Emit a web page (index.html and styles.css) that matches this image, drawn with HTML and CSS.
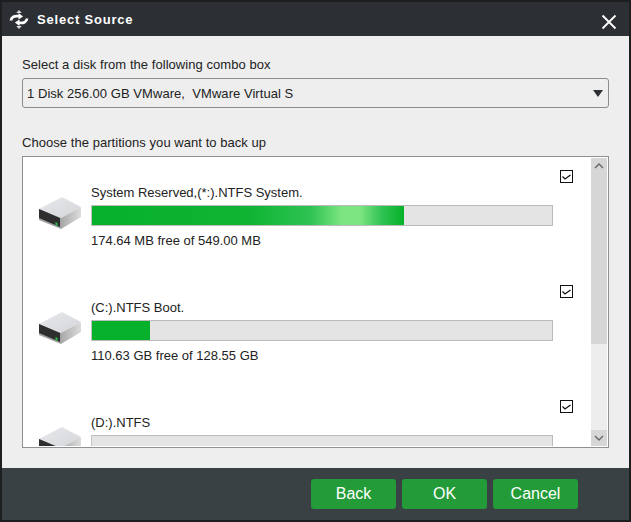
FILE: index.html
```html
<!DOCTYPE html>
<html lang="en">
<head>
<meta charset="utf-8">
<title>Select Source</title>
<link rel="stylesheet" href="styles.css">
</head>
<body>
<div class="dialog">
  <header class="titlebar">
    <svg class="logo" width="20" height="22" viewBox="0 0 20 22"><path d="M10 2l2.800 3H7.200zM10 21l-2.800-3h5.600z" fill="#d8d8d8"/><path d="M2 12.500C2.300 9 5.500 7.500 10 8.200" stroke="#fff" stroke-width="2.800" fill="none"/><path d="M18 10.500c-.3 3.500-3.500 5-8 4.300" stroke="#fff" stroke-width="2.800" fill="none"/><path d="M9.500 5l4.600 3.400-4.600 3.200zM10.500 18l-4.600-3.400 4.600-3.200z" fill="#fff"/></svg>
    <span class="title">Select Source</span>
    <svg class="close" width="16" height="16" viewBox="0 0 16 16"><path d="M1.500 1.500l13 13M14.500 1.500l-13 13" stroke="#fff" stroke-width="1.800" fill="none"/></svg>
  </header>
  <main class="content">
    <div class="label">Select a disk from the following combo box</div>
    <div class="combo"><span>1 Disk 256.00 GB VMware,&nbsp; VMware Virtual S</span><i class="caret"></i></div>
    <div class="label second">Choose the partitions you want to back up</div>
    <div class="listbox">
      <div class="rows">
        <section class="row">
          <span class="check"><svg width="13" height="13" viewBox="0 0 13 13"><path d="M2.500 6.500l2.500 2.500 5.500-4" stroke="#111" stroke-width="1.300" fill="none"/></svg></span>
          <svg class="drive" width="44" height="34" viewBox="0 0 44 34"><use href="#disk"/></svg>
          <div class="info">
            <div class="name">System Reserved,(*:).NTFS System.</div>
            <div class="bar"><div class="fill shine" style="width:67.800%"></div></div>
            <div class="free">174.64 MB free of 549.00 MB</div>
          </div>
        </section>
        <section class="row">
          <span class="check"><svg width="13" height="13" viewBox="0 0 13 13"><path d="M2.500 6.500l2.500 2.500 5.500-4" stroke="#111" stroke-width="1.300" fill="none"/></svg></span>
          <svg class="drive" width="44" height="34" viewBox="0 0 44 34"><use href="#disk"/></svg>
          <div class="info">
            <div class="name">(C:).NTFS Boot.</div>
            <div class="bar"><div class="fill" style="width:12.600%"></div></div>
            <div class="free">110.63 GB free of 128.55 GB</div>
          </div>
        </section>
        <section class="row">
          <span class="check"><svg width="13" height="13" viewBox="0 0 13 13"><path d="M2.500 6.500l2.500 2.500 5.500-4" stroke="#111" stroke-width="1.300" fill="none"/></svg></span>
          <svg class="drive" width="44" height="34" viewBox="0 0 44 34"><use href="#disk"/></svg>
          <div class="info">
            <div class="name">(D:).NTFS</div>
            <div class="bar"></div>
          </div>
        </section>
      </div>
      <div class="scrollbar">
        <div class="arrow"><svg width="10" height="6" viewBox="0 0 10 6"><path d="M1 5l4-4 4 4" stroke="#666" stroke-width="1.400" fill="none"/></svg></div>
        <div class="thumb"></div>
        <div class="track"></div>
        <div class="arrow"><svg width="10" height="6" viewBox="0 0 10 6"><path d="M1 1l4 4 4-4" stroke="#666" stroke-width="1.400" fill="none"/></svg></div>
      </div>
    </div>
  </main>
  <footer class="footer">
    <button class="btn">Back</button>
    <button class="btn">OK</button>
    <button class="btn">Cancel</button>
  </footer>
</div>
<svg class="defs" width="0" height="0">
  <defs>
    <linearGradient id="top" x1="0" y1="0" x2="1" y2="1"><stop offset="0" stop-color="#e8e9ec"/><stop offset="1" stop-color="#d4d5d9"/></linearGradient>
    <linearGradient id="side" x1="0" y1="0" x2="1" y2="0"><stop offset="0" stop-color="#a8a8a8"/><stop offset="1" stop-color="#dcdcdc"/></linearGradient>
    <g id="disk">
      <path d="M1 13L24 1l19 10-20 11z" fill="url(#top)"/>
      <path d="M23 22l20-11v10L23 33z" fill="url(#side)"/>
      <path d="M1 13l22 9v11L1 24z" fill="#a0a0a0"/>
      <path d="M1 13l21 9v9L1 22z" fill="#2e2e2e"/>
      <path d="M17.500 26l2 1v3l-2-1z" fill="#2fbf4a"/>
    </g>
  </defs>
</svg>
</body>
</html>
```
FILE: styles.css
```css
* { box-sizing: border-box; }
html, body { margin: 0; height: 100%; }
body {
  background: #1c1e20;
  padding: 2px;
  font-family: "Liberation Sans", Arial, sans-serif;
  font-size: 13px;
  color: #222;
  overflow: hidden;
}
.dialog {
  width: 627px;
  height: 518px;
  display: flex;
  flex-direction: column;
  background: #eeeeee;
}
.titlebar {
  height: 34px;
  flex: none;
  display: flex;
  align-items: center;
  padding: 0 11px 0 7px;
  background: #2c3034;
  color: #fff;
}
.logo { flex: none; margin-right: 8px; }
.title { font-weight: 700; font-size: 13px; letter-spacing: .8px; flex: 1; padding-top: 1px; }
.close { flex: none; margin-top: 5px; margin-right: 1px; }
.content { flex: 1; padding: 22px 20px 0; min-height: 0; }
.label { height: 14px; line-height: 14px; letter-spacing: .05px; }
.second { margin-top: 28px; }
.combo {
  margin-top: 6px;
  height: 30px;
  border: 1px solid #8c8c8c;
  border-radius: 3px;
  display: flex;
  align-items: center;
  justify-content: space-between;
  padding: 0 5px 0 4px;
  letter-spacing: .05px;
}
.caret {
  width: 0; height: 0;
  border-left: 5.500px solid transparent;
  border-right: 5.500px solid transparent;
  border-top: 7px solid #2c3034;
}
.listbox {
  margin-top: 6px;
  height: 292px;
  border: 1px solid #8f8f96;
  background: #fff;
  display: flex;
  padding: 1px;
  overflow: hidden;
}
.rows { flex: 1; overflow: hidden; min-width: 0; }
.row {
  height: 115px;
  position: relative;
  display: flex;
  padding: 27px 38px 0 14px;
}
.check {
  position: absolute;
  top: 12px;
  right: 18px;
  width: 13px;
  height: 13px;
  border: 1px solid #111;
  display: flex;
  align-items: center;
  justify-content: center;
  overflow: hidden;
}
.check svg { flex: none; }
.drive { flex: none; margin-top: 11px; margin-right: 9px; }
.info { flex: 1; min-width: 0; }
.name { height: 20px; line-height: 15px; }
.bar { height: 21px; background: #e4e4e4; border: 1px solid #bcbcbc; border-left-color: #c4c4c4; overflow: hidden; }
.fill { height: 100%; background: #07b12b; }
.shine {
  background: linear-gradient(90deg, #07b12b 0%, #0fb433 50%, #2ec352 70%, #7ce481 80%, #7ce481 86%, #2ec352 93%, #07b12b 100%);
}
.free { margin-top: 7px; line-height: 15px; }
.scrollbar { width: 16px; flex: none; display: flex; flex-direction: column; background: #ededed; }
.arrow { height: 16px; flex: none; background: #d6d6d6; display: flex; align-items: center; justify-content: center; }
.thumb { height: 170px; flex: none; background: #d6d6d6; }
.track { flex: 1; }
.footer {
  height: 52px;
  flex: none;
  background: #3a4144;
  display: flex;
  justify-content: flex-end;
  align-items: flex-start;
  gap: 6px;
  padding: 11px 51px 0 0;
}
.btn {
  width: 85px;
  height: 30px;
  padding: 0;
  border: 0;
  border-radius: 3px;
  background: #239b38;
  color: #fff;
  font: 16px "Liberation Sans", Arial, sans-serif;
}
.defs { position: absolute; }
```
